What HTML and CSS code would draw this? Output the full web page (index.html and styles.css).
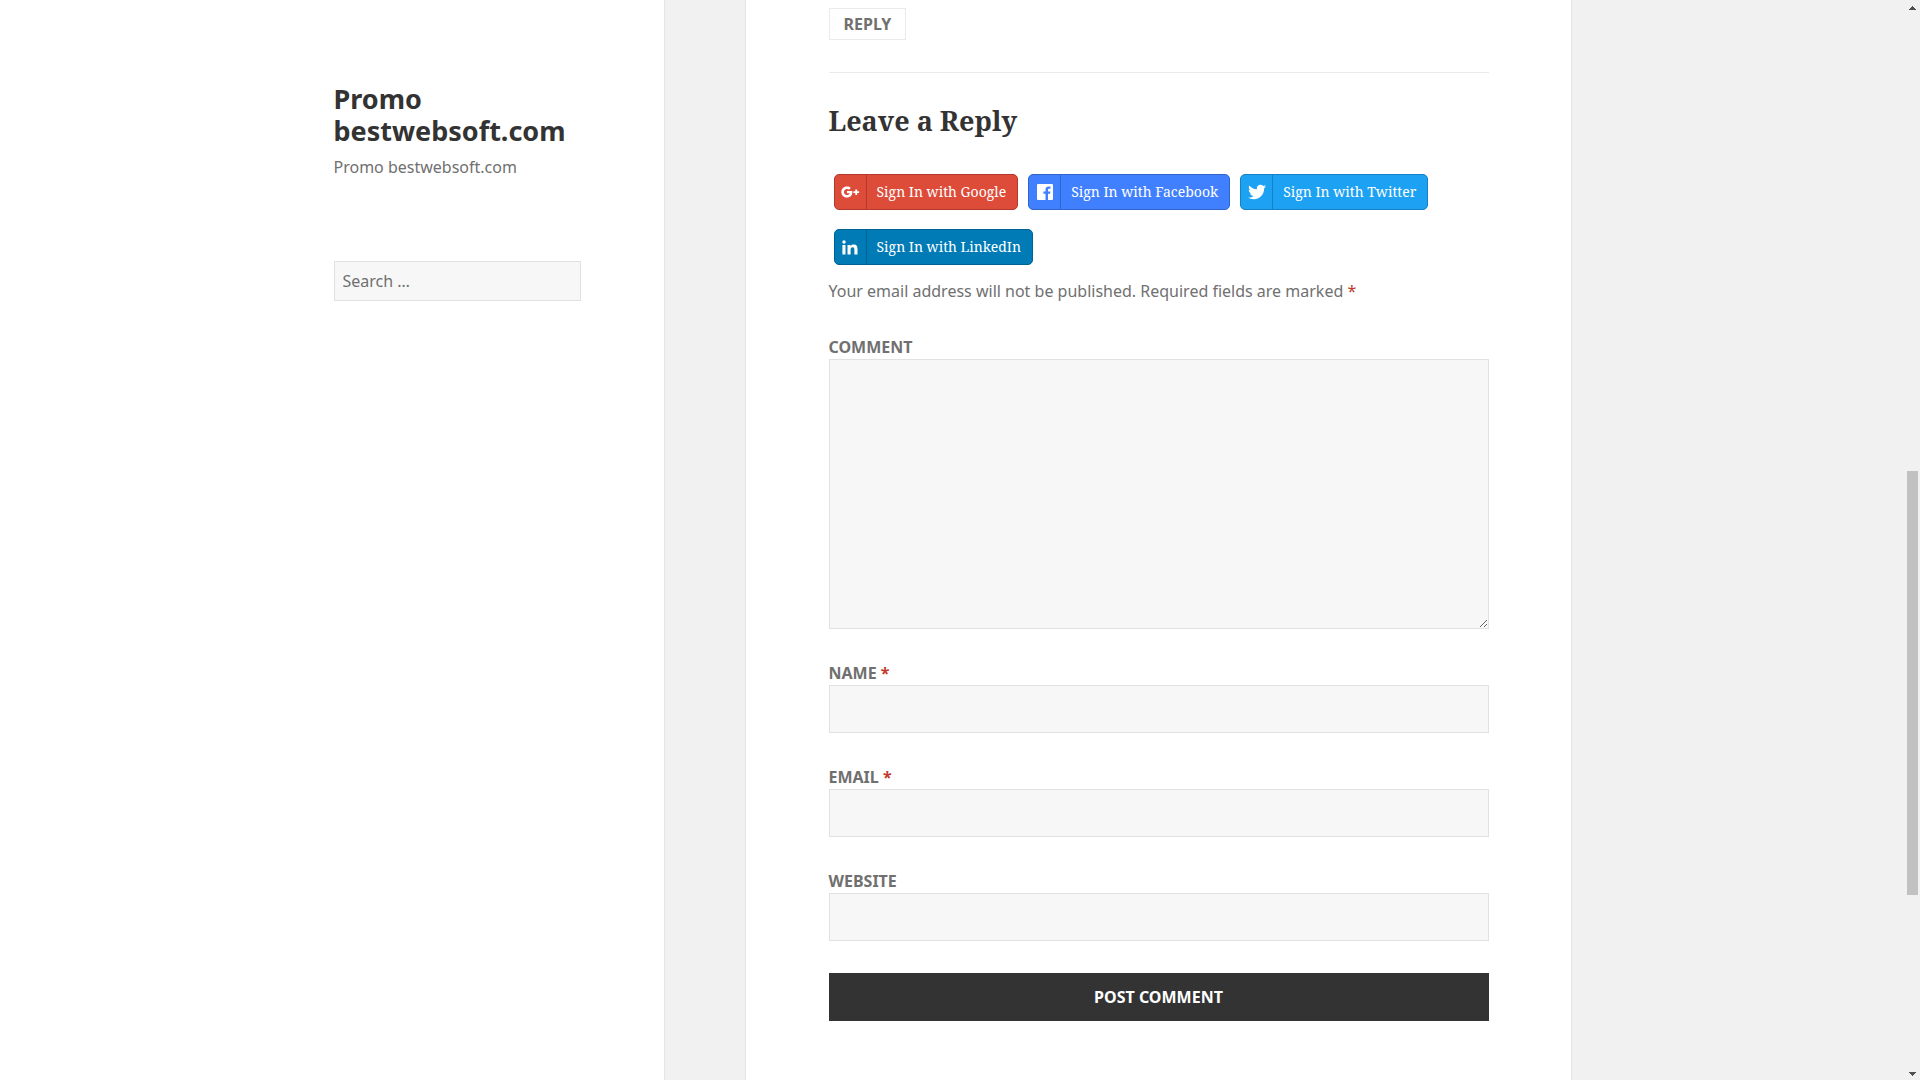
FILE: index.html
```html
<!DOCTYPE html>
<html lang="en">
<head>
<meta charset="utf-8">
<meta name="viewport" content="width=device-width, initial-scale=1">
<title>Promo bestwebsoft.com</title>
<link rel="stylesheet" href="styles.css">
</head>
<body>
<div class="window">
  <div class="site">
    <header class="sidebar">
      <div class="sidebar-inner">
        <p class="site-title"><a href="#">Promo bestwebsoft.com</a></p>
        <p class="site-description">Promo bestwebsoft.com</p>
        <form class="search" role="search">
          <input class="field search-field" type="search" placeholder="Search …" aria-label="Search for">
        </form>
      </div>
    </header>
    <main class="content">
      <section class="comments">
        <div class="comment-end"><a class="reply-link" href="#respond">REPLY</a></div>
        <h2 class="reply-title" id="respond">Leave a Reply</h2>
        <div class="social">
          <button type="button" class="signin google">
            <span class="signin-icon"><svg viewBox="0 0 20 20" width="20" height="20"><path d="M12.300 9H6.900v2.300h2.800c-.3 1.100-1.300 1.800-2.700 1.800a3.100 3.100 0 1 1 2.100-5.400l1.700-1.700A5.600 5.600 0 1 0 7 15.600c3.200 0 5.400-2.200 5.400-5.500ZM15.300 7.400v1.800h-1.900v1.900h1.900v1.800h1.900v-1.800h1.900V9.200h-1.900V7.400Z" fill="#fff"/></svg></span>
            <span class="signin-text">Sign In with Google</span>
          </button>
          <button type="button" class="signin facebook">
            <span class="signin-icon"><svg viewBox="0 0 20 20" width="20" height="20"><path d="M2.900 2h14.200c.5 0 .9.4.9.9v14.200c0 .5-.4.900-.9.9h-4.100v-6.200h2.100l.3-2.400H13V7.900c0-.7.200-1.200 1.200-1.200h1.300V4.500c-.2 0-1-.1-1.900-.1-1.900 0-3.100 1.100-3.100 3.200v1.800H8.400v2.400h2.100V18H2.900c-.5 0-.9-.4-.9-.9V2.900c0-.5.400-.9.900-.9Z" fill="#fff"/></svg></span>
            <span class="signin-text">Sign In with Facebook</span>
          </button>
          <button type="button" class="signin twitter">
            <span class="signin-icon"><svg viewBox="0 0 20 20" width="20" height="20"><path d="M18.940 4.460c-.49.730-1.110 1.380-1.830 1.900.010.150.010.310.010.470 0 4.850-3.690 10.440-10.430 10.440-2.070 0-4-.61-5.630-1.650.29.030.58.050.88.050 1.720 0 3.300-.590 4.550-1.570-1.600-.03-2.950-1.090-3.420-2.550.22.040.450.070.69.070.33 0 .66-.050.96-.13-1.670-.34-2.940-1.820-2.940-3.600v-.04c.5.270 1.060.440 1.660.46-.98-.66-1.630-1.780-1.630-3.060 0-.67.180-1.300.5-1.840 1.810 2.220 4.510 3.680 7.560 3.830-.06-.27-.1-.55-.1-.84 0-2.020 1.650-3.660 3.670-3.660 1.060 0 2.010.440 2.680 1.160.83-.17 1.620-.47 2.330-.89-.28.850-.86 1.570-1.620 2.020.75-.08 1.450-.28 2.110-.57Z" fill="#fff"/></svg></span>
            <span class="signin-text">Sign In with Twitter</span>
          </button>
          <button type="button" class="signin linkedin">
            <span class="signin-icon"><svg viewBox="0 0 20 20" width="20" height="20"><path d="M2.400 7.900h3.100v9.600H2.400ZM7.500 7.900h3v1.300c.5-.9 1.600-1.600 3.100-1.600 3.100 0 3.900 1.900 3.900 4.600v5.300h-3.100v-4.700c0-1.300-.2-2.600-1.800-2.600-1.500 0-2 1.100-2 2.500v4.800H7.500ZM4 3.200a1.700 1.700 0 1 1 0 3.500 1.700 1.700 0 0 1 0-3.500Z" fill="#fff"/></svg></span>
            <span class="signin-text">Sign In with LinkedIn</span>
          </button>
        </div>
        <form class="comment-form">
          <p class="notes">Your email address will not be published. Required fields are marked <span class="required">*</span></p>
          <div class="row">
            <label for="comment">COMMENT</label>
            <textarea class="field" id="comment" rows="8"></textarea>
          </div>
          <div class="row">
            <label for="author">NAME <span class="required">*</span></label>
            <input class="field" id="author" type="text">
          </div>
          <div class="row">
            <label for="email">EMAIL <span class="required">*</span></label>
            <input class="field" id="email" type="email">
          </div>
          <div class="row">
            <label for="url">WEBSITE</label>
            <input class="field" id="url" type="url">
          </div>
          <button class="submit" type="submit">POST COMMENT</button>
        </form>
      </section>
    </main>
  </div>
  <div class="scrollbar" aria-hidden="true">
    <svg class="arrow" viewBox="0 0 7 4" width="7" height="4"><path d="M3 0h1v1h1v1h1v1h1v1H0V3h1V2h1V1h1Z" fill="#505050"/></svg>
    <div class="track"><div class="thumb"></div></div>
    <svg class="arrow" viewBox="0 0 7 4" width="7" height="4"><path d="M0 0h7v1H6v1H5v1H4v1H3V3H2V2H1V1H0Z" fill="#505050"/></svg>
  </div>
</div>
</body>
</html>
```
FILE: styles.css
```css
* {
  box-sizing: border-box;
}

body {
  margin: 0;
  background: #f1f1f1;
  color: #707070;
  font-family: "Noto Sans", sans-serif;
  font-size: 16px;
  line-height: 24px;
}

p,
h2 {
  margin: 0;
}

.window {
  display: flex;
  min-height: 100vh;
}

.site {
  flex: 1;
  display: grid;
  grid-template-columns: calc(50% - 288px) minmax(0, 990px);
}

.sidebar {
  display: flex;
  justify-content: flex-end;
  padding: 83px 83px 0 24px;
  background: #fff;
  border-right: 1px solid #e5e5e5;
}

.sidebar-inner {
  width: 247px;
}

.site-title {
  font-size: 27px;
  font-weight: 700;
  line-height: 32px;
}

.site-title a {
  color: #333;
  text-decoration: none;
}

.site-description {
  margin-top: 8px;
}

.search {
  margin-top: 82px;
}

.field {
  display: block;
  width: 100%;
  height: 48px;
  padding: 8px;
  background: #f7f7f7;
  border: 1px solid #e1e1e1;
  border-radius: 0;
  color: #707070;
  font: inherit;
}

.search-field {
  height: 40px;
  appearance: none;
}

.search-field::placeholder {
  color: #707070;
}

.content {
  display: flex;
  padding: 0 83px 0 80px;
}

.comments {
  flex: 1;
  padding: 8px 82px 59px 83px;
  background: #fff;
  border: solid #e5e5e5;
  border-width: 0 1px;
}

.comment-end {
  padding-bottom: 32px;
  border-bottom: 1px solid #eaeaea;
}

.reply-link {
  display: block;
  width: fit-content;
  padding: 3px 14px;
  border: 1px solid #eaeaea;
  color: #707070;
  font-weight: 700;
  text-decoration: none;
}

.reply-title {
  margin-top: 32px;
  color: #333;
  font-family: "Noto Serif", "Droid Serif", "Liberation Serif", serif;
  font-size: 27px;
  font-weight: 700;
  line-height: 32px;
}

.social {
  display: flex;
  flex-wrap: wrap;
  gap: 19px 10px;
  padding: 37px 5px 0;
}

.signin {
  display: flex;
  height: 36px;
  padding: 0;
  border: 1px solid;
  border-radius: 5px;
  color: #fff;
  font-family: "Noto Serif", "Droid Serif", "Liberation Serif", serif;
  font-size: 14px;
  line-height: 34px;
}

.signin-icon {
  display: flex;
  align-items: center;
  justify-content: center;
  width: 32px;
  height: 34px;
  border-right: 1px solid;
  border-color: inherit;
}

.signin-text {
  padding: 0 11px 0 10px;
}

.google {
  background: #dd4b39;
  border-color: #b33a2b;
}

.facebook {
  background: #4080ff;
  border-color: #3066cc;
}

.twitter {
  background: #1da1f2;
  border-color: #1781c2;
}

.linkedin {
  background: #007bb6;
  border-color: #006292;
}

.notes {
  margin-top: 14px;
}

.required {
  color: #c0392b;
}

.row {
  margin-top: 32px;
}

.row label {
  display: block;
  font-weight: 700;
}

textarea.field {
  height: 270px;
  resize: vertical;
}

.submit {
  display: block;
  width: 100%;
  height: 48px;
  margin-top: 32px;
  padding: 0;
  border: 0;
  background: #333;
  color: #fff;
  font: inherit;
  font-weight: 700;
}

.scrollbar {
  display: flex;
  flex-direction: column;
  align-items: center;
  gap: 6px;
  width: 15px;
  height: 100vh;
  padding: 6px 0 4px;
}

.track {
  flex: 1;
  width: 11px;
}

.thumb {
  height: 424px;
  margin-top: 455px;
  background: #c1c1c1;
}
```
